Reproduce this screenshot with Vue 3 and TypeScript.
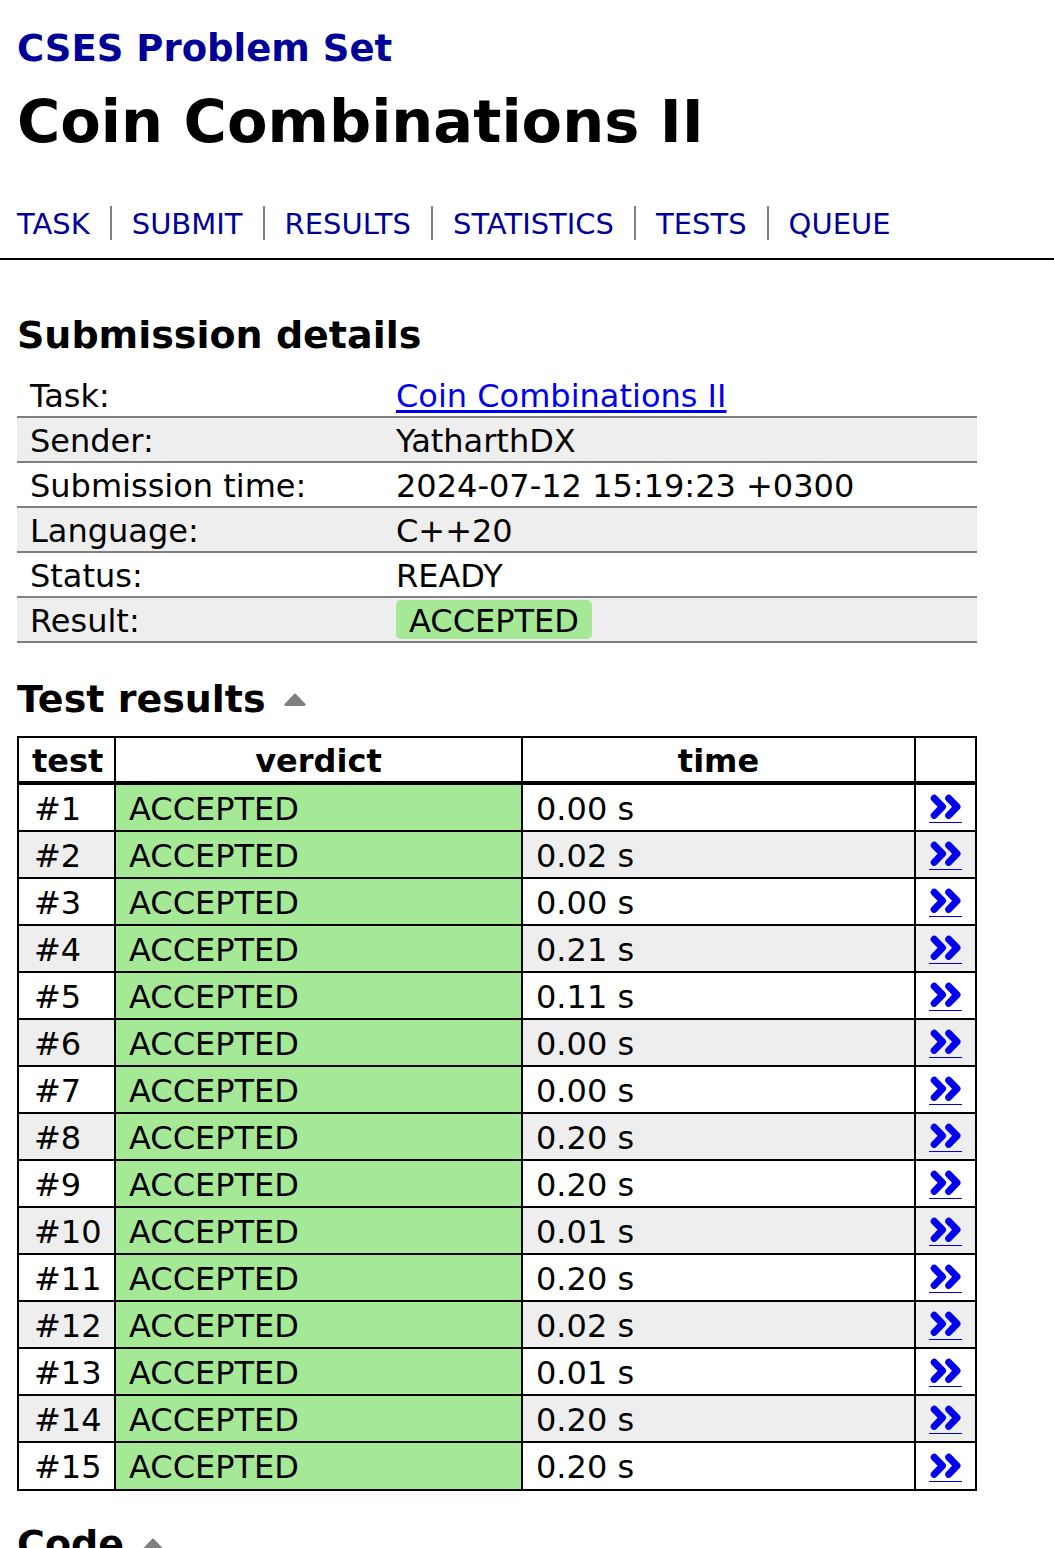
<script setup lang="ts">
interface NavItem {
  label: string
  href: string
}

interface TestResult {
  id: number
  verdict: string
  time: string
}

const navItems: NavItem[] = [
  { label: 'TASK', href: '#task' },
  { label: 'SUBMIT', href: '#submit' },
  { label: 'RESULTS', href: '#results' },
  { label: 'STATISTICS', href: '#statistics' },
  { label: 'TESTS', href: '#tests' },
  { label: 'QUEUE', href: '#queue' },
]

const times: string[] = [
  '0.00', '0.02', '0.00', '0.21', '0.11', '0.00', '0.00', '0.20',
  '0.20', '0.01', '0.20', '0.02', '0.01', '0.20', '0.20',
]

const results: TestResult[] = times.map((time, index) => ({
  id: index + 1,
  verdict: 'ACCEPTED',
  time: `${time} s`,
}))
</script>

<template>
  <div class="page">
    <header class="header">
      <div class="brand"><a href="#problemset">CSES Problem Set</a></div>
      <h1>Coin Combinations II</h1>
      <nav>
        <ul class="nav">
          <li v-for="item in navItems" :key="item.label">
            <a :href="item.href">{{ item.label }}</a>
          </li>
        </ul>
      </nav>
    </header>

    <main class="content">
      <h2 class="first">Submission details</h2>
      <table class="details">
        <tbody>
          <tr>
            <th scope="row">Task:</th>
            <td><a href="#task">Coin Combinations II</a></td>
          </tr>
          <tr>
            <th scope="row">Sender:</th>
            <td>YatharthDX</td>
          </tr>
          <tr>
            <th scope="row">Submission time:</th>
            <td>2024-07-12 15:19:23 +0300</td>
          </tr>
          <tr>
            <th scope="row">Language:</th>
            <td>C++20</td>
          </tr>
          <tr>
            <th scope="row">Status:</th>
            <td>READY</td>
          </tr>
          <tr>
            <th scope="row">Result:</th>
            <td class="result"><span class="badge">ACCEPTED</span></td>
          </tr>
        </tbody>
      </table>

      <h2>
        Test results
        <button type="button" class="toggle" aria-label="Toggle test results">
          <svg width="22" height="13" viewBox="0 0 22 13" aria-hidden="true">
            <path d="M2 13Q-1 12.500 1 10.500L10 1Q11 0 12 1L21 10.500Q23 12.500 20 13Z" fill="currentColor" />
          </svg>
        </button>
      </h2>
      <table class="tests">
        <colgroup>
          <col class="col-test" />
          <col class="col-verdict" />
          <col />
          <col class="col-more" />
        </colgroup>
        <thead>
          <tr>
            <th scope="col">test</th>
            <th scope="col">verdict</th>
            <th scope="col">time</th>
            <td></td>
          </tr>
        </thead>
        <tbody>
          <tr v-for="result in results" :key="result.id">
            <td class="id">#{{ result.id }}</td>
            <td class="verdict">{{ result.verdict }}</td>
            <td>{{ result.time }}</td>
            <td class="more">
              <a :href="`#test${result.id}`" :aria-label="`Test ${result.id} details`">
                <svg width="33" height="31" viewBox="0 0 33 31" aria-hidden="true">
                  <path d="M5.200 7.200l8.300 8.600-8.300 8.600M19.700 7.200l8.300 8.600-8.300 8.600" fill="none" stroke="currentColor" stroke-width="7" stroke-linecap="round" stroke-linejoin="round" />
                </svg>
              </a>
            </td>
          </tr>
        </tbody>
      </table>

      <h2>
        Code
        <button type="button" class="toggle" aria-label="Toggle code">
          <svg width="22" height="13" viewBox="0 0 22 13" aria-hidden="true">
            <path d="M2 13Q-1 12.500 1 10.500L10 1Q11 0 12 1L21 10.500Q23 12.500 20 13Z" fill="currentColor" />
          </svg>
        </button>
      </h2>
    </main>
  </div>
</template>

<style>
body {
  background: #fff;
}
</style>

<style scoped>
.page {
  color: #000;
  font-family: Verdana, "DejaVu Sans", sans-serif;
  font-size: 32px;
}

.header {
  padding: 26px 17px 18px;
  border-bottom: 2px solid #000;
}

.header a {
  color: #000099;
  text-decoration: none;
}

.brand {
  font-size: 37px;
  font-weight: bold;
  line-height: 46px;
}

h1 {
  margin: 15px 0 49px;
  font-size: 59px;
  line-height: 70px;
}

.nav {
  display: flex;
  flex-wrap: wrap;
  margin: 0;
  padding: 0;
  list-style: none;
  font-size: 29px;
  line-height: 32px;
}

.nav li {
  padding-top: 2px;
}

.nav li + li {
  margin-left: 20px;
  padding-left: 20px;
  border-left: 2px solid #808080;
}

.content {
  box-sizing: border-box;
  max-width: 994px;
  padding: 0 17px;
}

h2 {
  display: flex;
  align-items: center;
  gap: 18px;
  margin: 30px 0 14px;
  font-size: 38px;
  line-height: 46px;
}

h2.first {
  margin: 52px 0 15px;
}

.toggle {
  display: flex;
  padding: 0;
  border: 0;
  background: none;
  color: #808080;
}

table {
  width: 100%;
  border-collapse: collapse;
}

.details {
  margin-bottom: 33px;
}

.details th,
.details td {
  padding: 4px 13px 0;
  border-bottom: 2px solid #808080;
  font-weight: normal;
  line-height: 39px;
  text-align: left;
}

.details th {
  width: 340px;
}

.details a {
  color: #0000ee;
  text-decoration-thickness: 3px;
  text-underline-offset: 3px;
}

.details .result {
  padding: 2px 13px;
  line-height: 35px;
}

tbody tr:nth-child(even) {
  background: #eee;
}

.badge {
  display: inline-block;
  padding: 4px 13px 0;
  border-radius: 5px;
  background: #a5e997;
}

.tests {
  table-layout: fixed;
}

.col-test {
  width: 97px;
}

.col-verdict {
  width: 407px;
}

.col-more {
  width: 61px;
}

.tests th,
.tests td {
  padding: 4px 13px 0;
  border: 2px solid #000;
  line-height: 41px;
}

.tests thead th,
.tests thead td {
  border-bottom-width: 4px;
  line-height: 39px;
}

.tests tbody tr:last-child td {
  padding-bottom: 1px;
}

.tests .id {
  padding-left: 15px;
  padding-right: 0;
}

.tests .verdict {
  background: #a5e997;
}

.tests tbody .more {
  padding-top: 0;
  padding-bottom: 2px;
}

.more a {
  display: block;
  border-bottom: 1px solid #0000ee;
  color: #0000ee;
}

.more svg {
  display: block;
}
</style>
